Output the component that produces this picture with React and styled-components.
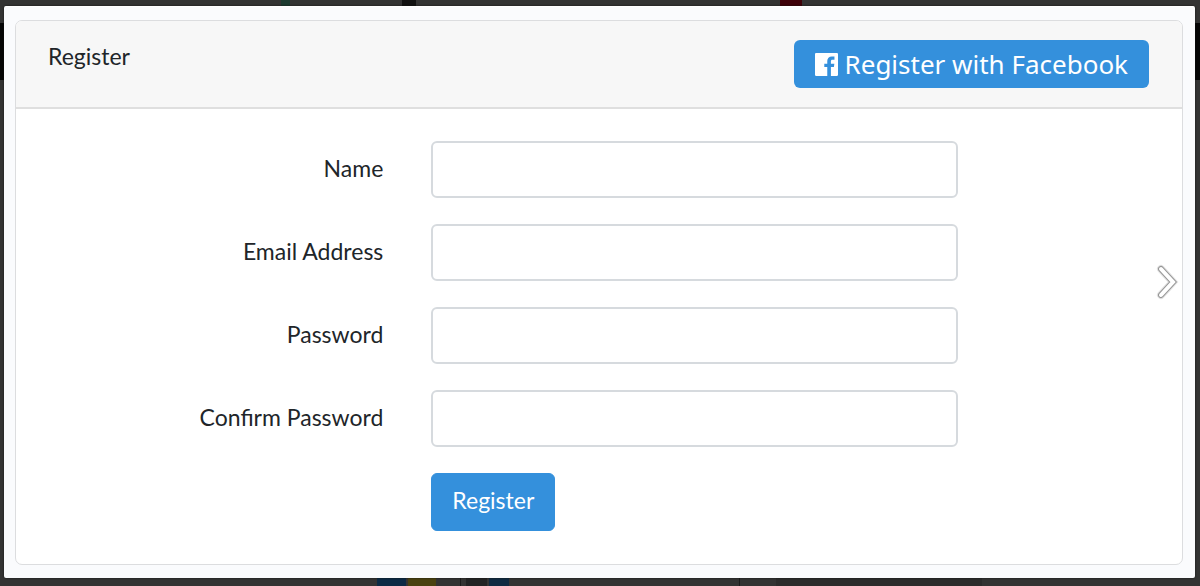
import styled, { createGlobalStyle } from "styled-components";

const GlobalStyle = createGlobalStyle`
  *,
  *::before,
  *::after {
    box-sizing: border-box;
  }

  body {
    margin: 0;
    background: #333333;
    color: #212529;
    font-family: Lato, "Open Sans", sans-serif;
    font-size: 23px;
    line-height: 36px;
  }
`;

const Page = styled.div`
  position: relative;
  display: flex;
  min-height: 100vh;
  padding: 6px 5px 8px 4px;
  overflow: hidden;
`;

// what is left visible of the page under the lightbox
const Backdrop = styled.div`
  position: absolute;
  inset: 0;
  display: flex;
  flex-direction: column;
`;

const Navbar = styled.div`
  height: 57px;
  margin: 17px 0 auto;
  background: #050505;
`;

const Strip = styled.div`
  display: flex;
  height: ${({ $height }) => $height};
`;

const Mark = styled.span`
  flex: none;
  width: ${({ $width }) => $width};
  background: ${({ $color }) => $color || "transparent"};
`;

const Lightbox = styled.main`
  position: relative;
  flex: 1;
  padding: 13px 12px 13px 11px;
  border-radius: 2px;
  background: #fafbfd;
  border-top: 1px solid #ffffff;
  box-shadow: 0 0 2px #111111;
`;

const Card = styled.section`
  border: 1px solid #dcdddf;
  border-radius: 7px;
  background: #ffffff;
  overflow: hidden;
`;

const CardHeader = styled.header`
  display: flex;
  align-items: flex-start;
  justify-content: space-between;
  padding: 19px 33px 19px 32px;
  border-bottom: 2px solid #dfdfdf;
  background: #f7f7f7;
`;

const Title = styled.h1`
  margin: 0;
  font-size: 23px;
  font-weight: 400;
  line-height: 32px;
`;

const Button = styled.button`
  padding: 8px 20px 12px;
  border: 1px solid #3490dc;
  border-radius: 6px;
  background: #3490dc;
  color: #ffffff;
  font: inherit;
  cursor: pointer;
`;

const FacebookButton = styled.a`
  display: inline-flex;
  align-items: center;
  gap: 7px;
  padding: 6px 21px;
  border-radius: 6px;
  background: #3490dc;
  color: #ffffff;
  font-family: "Noto Sans", "Open Sans", sans-serif;
  font-size: 26px;
  text-decoration: none;
`;

const Form = styled.form`
  display: flex;
  flex-direction: column;
  gap: 26px;
  padding: 32px 8px 33px;
`;

const Row = styled.div`
  display: grid;
  grid-template-columns: 4fr 6fr 2fr;
  align-items: center;
`;

const Label = styled.label`
  padding: 0 24px 4px;
  text-align: right;
`;

const Field = styled.div`
  display: flex;
  grid-column: 2;
  padding: 0 24px;
`;

const Input = styled.input`
  width: 100%;
  padding: 9px 18px;
  border: 2px solid #d6dade;
  border-radius: 6px;
  background: #ffffff;
  color: #495057;
  font: inherit;
  line-height: 35px;
`;

const NextButton = styled.button`
  position: absolute;
  top: 50%;
  right: 14px;
  display: flex;
  margin-top: -30px;
  padding: 0;
  border: 0;
  background: none;
  cursor: pointer;
`;

const topMarks = [
  { width: "281px" },
  { width: "9px", color: "#1c3a30" },
  { width: "112px" },
  { width: "14px", color: "#111111" },
  { width: "364px" },
  { width: "22px", color: "#3d0008" },
];

const bottomMarks = [
  { width: "377px" },
  { width: "29px", color: "#0c2a45" },
  { width: "2px" },
  { width: "28px", color: "#4a4210" },
  { width: "24px" },
  { width: "1px", color: "#1c1c1c" },
  { width: "5px" },
  { width: "21px", color: "#222324" },
  { width: "2px" },
  { width: "20px", color: "#0f2a42" },
  { width: "230px" },
  { width: "1px", color: "#1c1c1c" },
  { width: "36px" },
  { width: "206px", color: "#2c2c2c" },
];

const fields = [
  { id: "name", label: "Name", type: "text" },
  { id: "email", label: "Email Address", type: "email" },
  { id: "password", label: "Password", type: "password" },
  { id: "password-confirm", label: "Confirm Password", type: "password" },
];

const FacebookIcon = () => (
  <svg width="23" height="23" viewBox="0 0 24 24" fill="#ffffff" aria-hidden="true">
    <path d="M22.7 0H1.3C.6 0 0 .6 0 1.3v21.4c0 .7.6 1.3 1.3 1.3h11.5v-9.3H9.7v-3.6h3.1V8.4c0-3.1 1.9-4.8 4.7-4.8 1.3 0 2.5.1 2.8.1V7h-1.9c-1.5 0-1.8.7-1.8 1.8v2.3h3.6l-.5 3.6h-3.1V24h6.1c.7 0 1.3-.6 1.3-1.3V1.3C24 .6 23.4 0 22.7 0z" />
  </svg>
);

const ChevronIcon = () => (
  <svg width="26" height="38" viewBox="0 0 26 38" fill="none" aria-hidden="true">
    <g strokeLinecap="round" strokeLinejoin="miter">
      <path d="M6 6L18 19L6 32" stroke="#e4e4e4" strokeWidth="8" />
      <path d="M6 6L18 19L6 32" stroke="#969696" strokeWidth="6" />
      <path d="M6 6L18 19L6 32" stroke="#ffffff" strokeWidth="4" />
    </g>
  </svg>
);

const App = () => {
  return (
    <>
      <GlobalStyle />
      <Page>
        <Backdrop aria-hidden="true">
          <Strip $height="6px">
            {topMarks.map(({ width, color }, i) => (
              <Mark key={i} $width={width} $color={color} />
            ))}
          </Strip>
          <Navbar />
          <Strip $height="8px">
            {bottomMarks.map(({ width, color }, i) => (
              <Mark key={i} $width={width} $color={color} />
            ))}
          </Strip>
        </Backdrop>
        <Lightbox>
          <Card>
            <CardHeader>
              <Title>Register</Title>
              <FacebookButton href="#facebook">
                <FacebookIcon />
                Register with Facebook
              </FacebookButton>
            </CardHeader>
            <Form onSubmit={(e) => e.preventDefault()}>
              {fields.map(({ id, label, type }) => (
                <Row key={id}>
                  <Label htmlFor={id}>{label}</Label>
                  <Field>
                    <Input id={id} name={id} type={type} />
                  </Field>
                </Row>
              ))}
              <Row>
                <Field>
                  <Button type="submit">Register</Button>
                </Field>
              </Row>
            </Form>
          </Card>
          <NextButton type="button" aria-label="Next">
            <ChevronIcon />
          </NextButton>
        </Lightbox>
      </Page>
    </>
  );
};

export default App;
